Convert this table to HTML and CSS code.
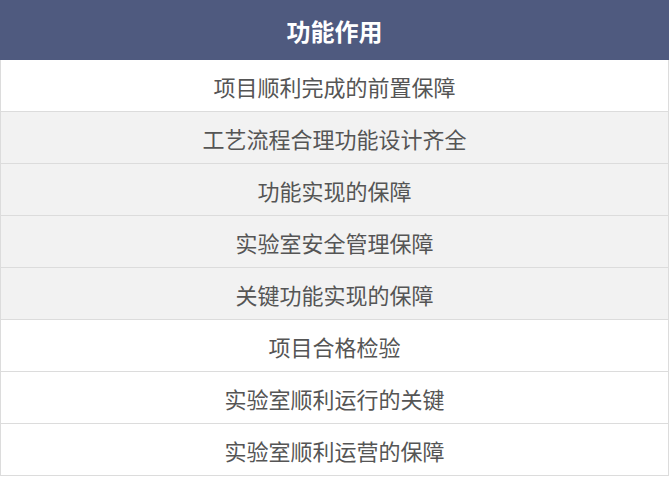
FILE: index.html
```html
<!DOCTYPE html>
<html lang="zh">
<head>
<meta charset="utf-8">
<link rel="stylesheet" href="styles.css">
</head>
<body>
<div class="table">
  <div class="head">功能作用</div>
  <div class="row">项目顺利完成的前置保障</div>
  <div class="row alt">工艺流程合理功能设计齐全</div>
  <div class="row alt">功能实现的保障</div>
  <div class="row alt">实验室安全管理保障</div>
  <div class="row alt">关键功能实现的保障</div>
  <div class="row">项目合格检验</div>
  <div class="row">实验室顺利运行的关键</div>
  <div class="row">实验室顺利运营的保障</div>
</div>
</body>
</html>
```
FILE: styles.css
```css
html, body { margin: 0; padding: 0; background: #fff; }
.table {
  width: 669px;
  font-family: "Noto Sans CJK SC", "Noto Sans", sans-serif;
}
.head {
  height: 60px;
  background: #4f5a7f;
  color: #fff;
  font-weight: bold;
  font-size: 24px;
  display: flex;
  align-items: center;
  justify-content: center;
}
.row {
  height: 51px;
  border: 1px solid #dcdcdc;
  border-top: none;
  background: #fff;
  color: #555;
  font-size: 22px;
  display: flex;
  align-items: center;
  justify-content: center;
  box-sizing: content-box;
  width: 667px;
}
.row.alt { background: #f2f2f2; }
```
